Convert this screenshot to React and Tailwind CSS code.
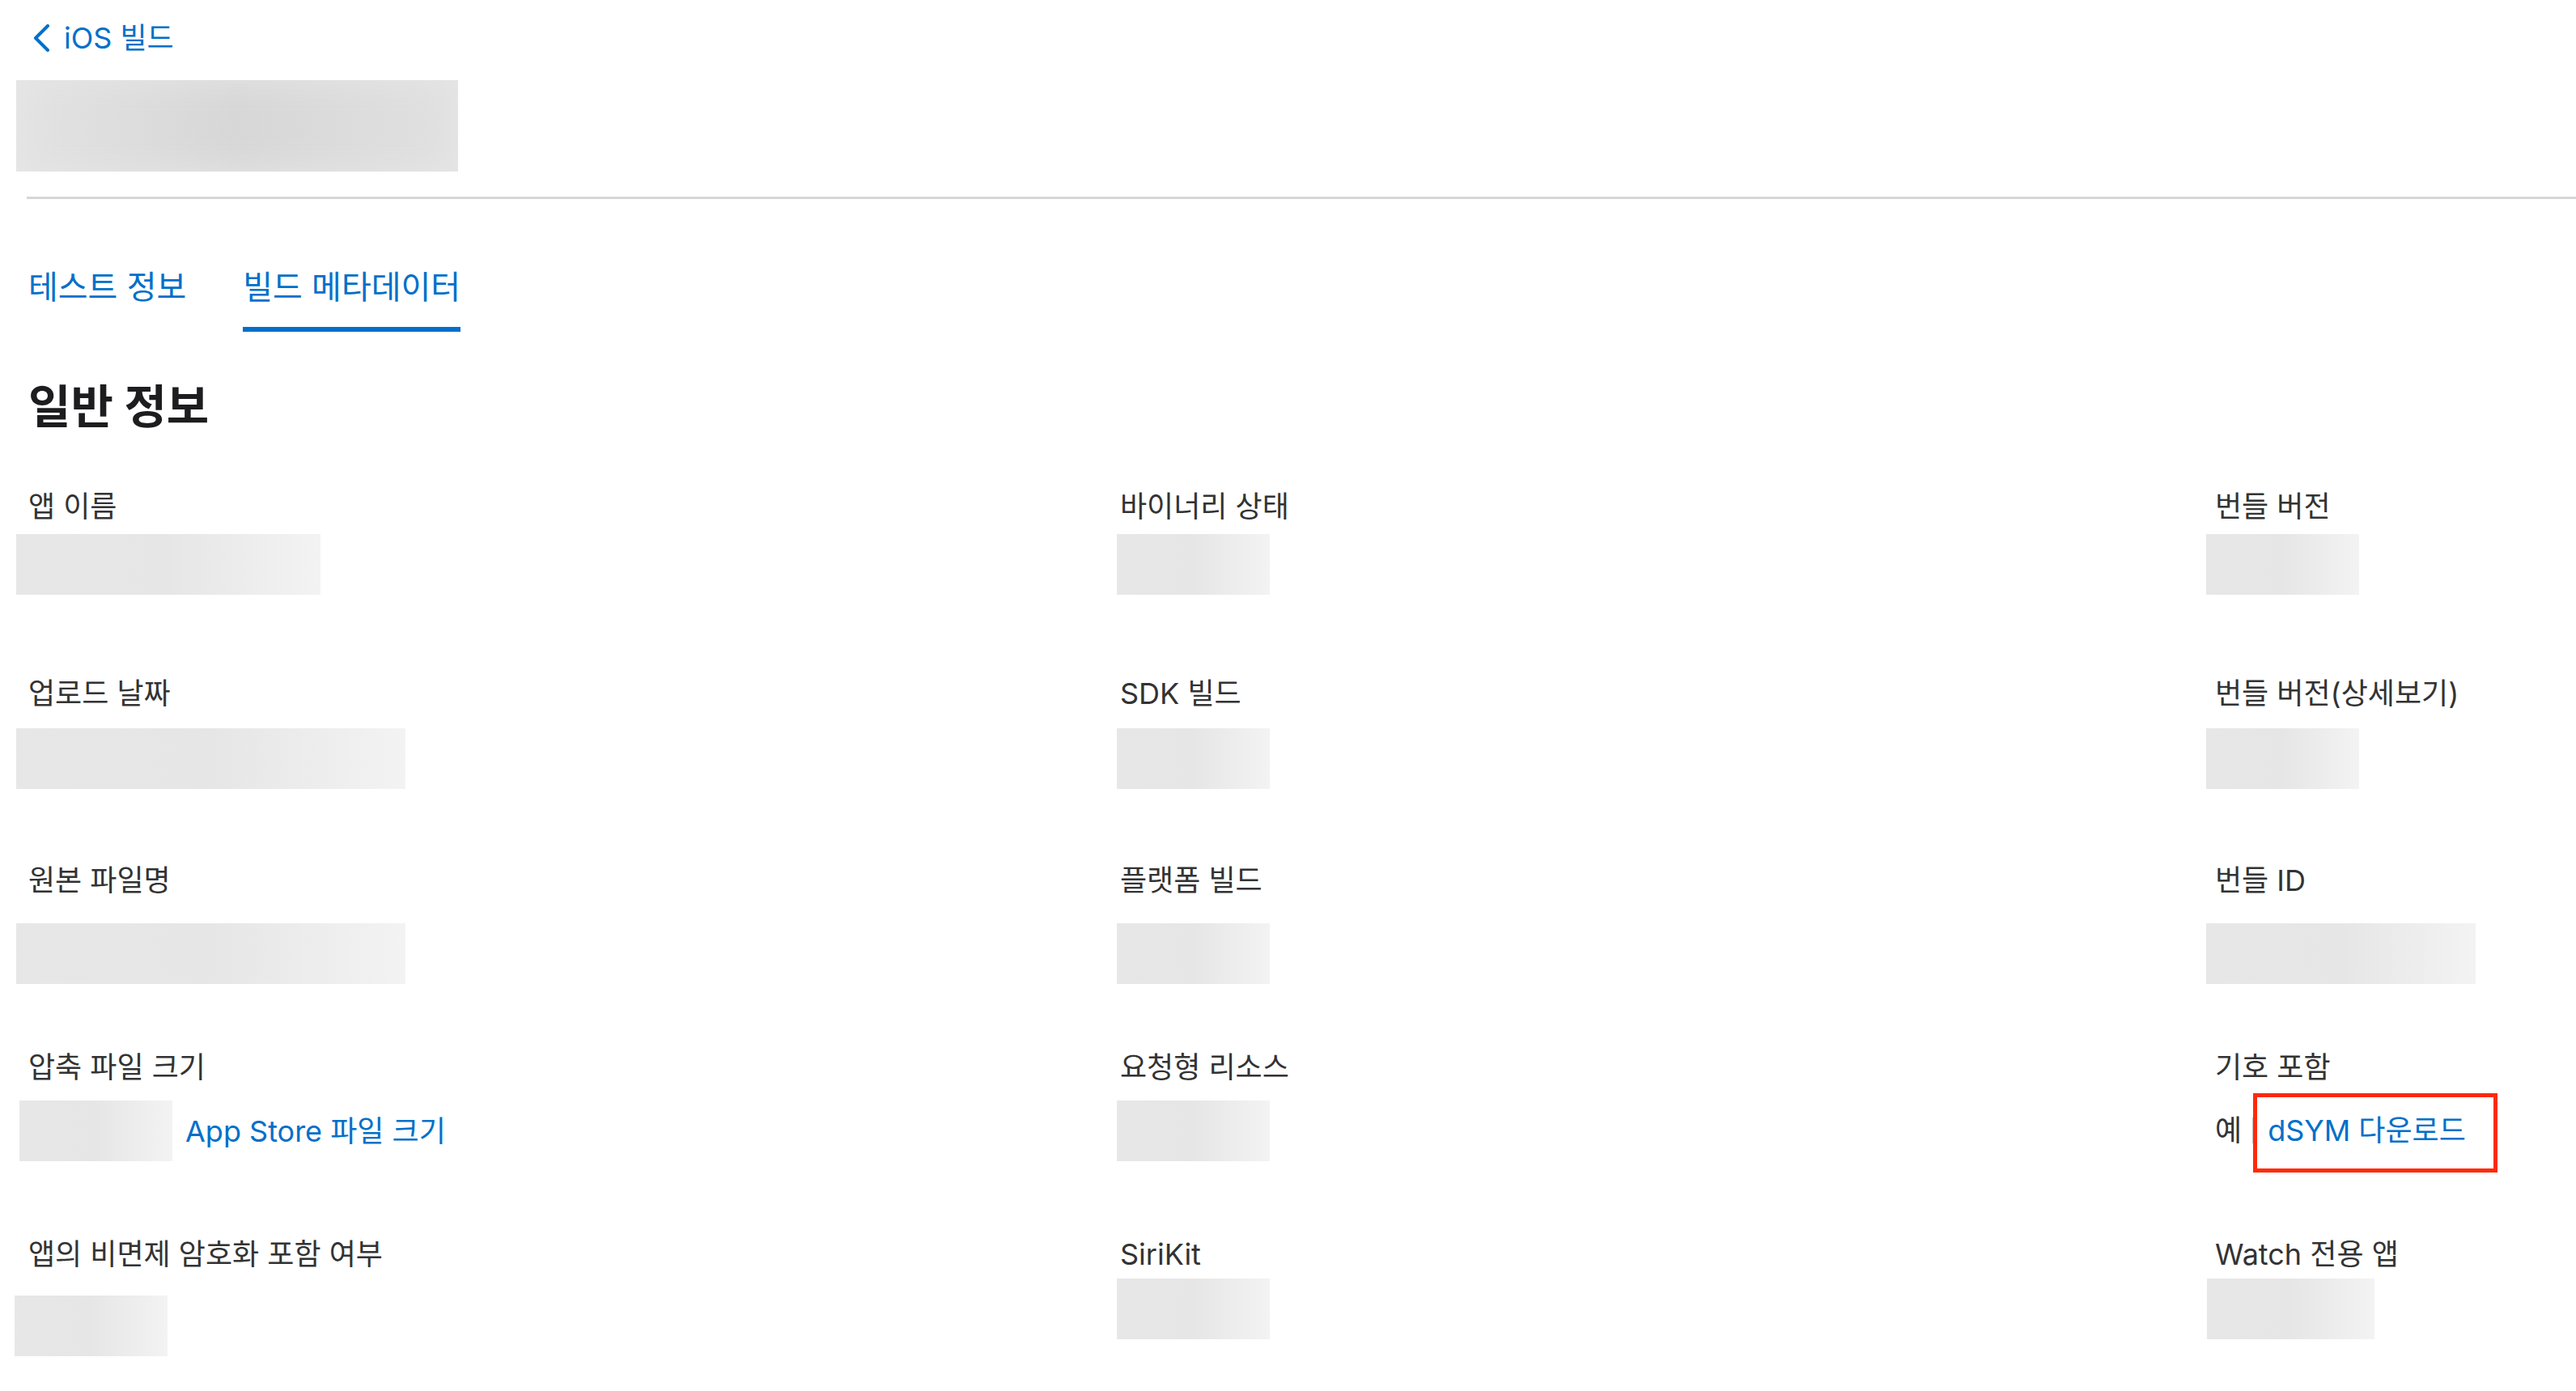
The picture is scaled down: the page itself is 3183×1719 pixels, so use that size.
const box = 'h-[75px] bg-linear-to-r from-[#e7e7e7] via-[#e6e6e6] to-[#f3f3f3]';

const fields = [
  { label: '앱 이름', value: 'ml-[-15px] mt-[12px] w-[376px]' },
  { label: '바이너리 상태', value: 'ml-[-4px] mt-[12px] w-[189px]' },
  { label: '번들 버전', value: 'ml-[-11px] mt-[12px] w-[189px]' },
  { label: '업로드 날짜', value: 'ml-[-15px] mt-[21px] w-[481px]' },
  { label: 'SDK 빌드', value: 'ml-[-4px] mt-[21px] w-[189px]' },
  { label: '번들 버전(상세보기)', value: 'ml-[-11px] mt-[21px] w-[189px]' },
  { label: '원본 파일명', value: 'ml-[-15px] mt-[31px] w-[481px]' },
  { label: '플랫폼 빌드', value: 'ml-[-4px] mt-[31px] w-[189px]' },
  { label: '번들 ID', value: 'ml-[-11px] mt-[31px] w-[333px]' },
  { label: '압축 파일 크기', kind: 'size' },
  { label: '요청형 리소스', value: 'ml-[-4px] mt-[19px] w-[189px]' },
  { label: '기호 포함', kind: 'dsym' },
  { label: '앱의 비면제 암호화 포함 여부', value: 'ml-[-17px] mt-[29px] w-[189px]' },
  { label: 'SiriKit', value: 'ml-[-4px] mt-[8px] w-[189px]' },
  { label: 'Watch 전용 앱', value: 'ml-[-10px] mt-[8px] w-[207px]' },
];

const Field = ({ field }) => {
  let body;
  if (field.kind === 'size') {
    body = (
      <div className="ml-[-11px] mt-[19px] flex items-center gap-[16px]">
        <div className={`${box} w-[189px]`} />
        <a className="text-[#0070c9] leading-[44px]">App Store 파일 크기</a>
      </div>
    );
  } else if (field.kind === 'dsym') {
    body = (
      <div className="mt-[34px] flex items-center leading-[44px]">
        <span>예</span>
        <span className="ml-[13px] h-[32px] w-[2px] bg-[#c4c4c4]" />
        <span className="relative ml-[17px]">
          <a className="text-[#0070c9]">dSYM 다운로드</a>
          <span className="absolute left-[-18px] top-[-24px] h-[98px] w-[302px] border-[5px] border-[#ff2a0a]" />
        </span>
      </div>
    );
  } else {
    body = <div className={`${box} ${field.value}`} />;
  }
  return (
    <div className="h-[231px]">
      <div className="leading-[44px]">{field.label}</div>
      {body}
    </div>
  );
};

export default function App() {
  return (
    <div className="min-h-screen overflow-hidden bg-white font-[Inter,'Noto_Sans_CJK_KR',sans-serif] text-[36px] text-[#333333]">
      <a className="flex items-center pl-[40px] pt-[25px] leading-[44px] text-[#0070c9]">
        <svg width="22" height="34" viewBox="0 0 22 34" fill="none">
          <polyline points="19,2 4,17 19,32" stroke="#0070c9" strokeWidth="4" strokeLinecap="round" strokeLinejoin="round" />
        </svg>
        <span className="ml-[17px]">iOS 빌드</span>
      </a>

      <div className="ml-[20px] mt-[30px] h-[113px] w-[546px] bg-linear-to-r from-[#e3e3e3] via-[#d7d7d7] to-[#e1e1e1] shadow-[inset_0_0_40px_#e6e6e6]" />

      <div className="ml-[33px] mt-[31px] h-[3px] bg-[#d6d6d6]" />

      <div className="ml-[35px] mt-[85px] flex gap-[70px] text-[40px] leading-[48px] text-[#0070c9]">
        <button className="pb-[31px]">테스트 정보</button>
        <button className="border-b-[6px] border-[#0070c9] pb-[25px]">빌드 메타데이터</button>
      </div>

      <h2 className="ml-[35px] mt-[61px] text-[57px] font-bold leading-[64px] text-[#1d1d1f]">일반 정보</h2>

      <div className="mt-[69px] grid grid-cols-[1349px_1353px_1fr] pl-[35px]">
        {fields.map((f) => (
          <Field key={f.label} field={f} />
        ))}
      </div>
    </div>
  );
}
